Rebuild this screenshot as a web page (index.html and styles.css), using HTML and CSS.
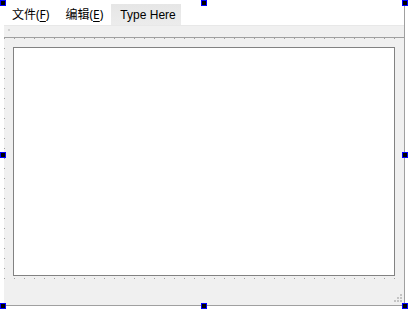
FILE: index.html
```html
<!DOCTYPE html>
<html>
<head>
  <meta charset="utf-8">
  <link rel="stylesheet" href="styles.css">
</head>
<body>
  <div class="canvas">
    <div class="form">
      <div class="menubar">
        <span class="menu-item">文件(<u>F</u>)</span>
        <span class="menu-item">编辑(<u>E</u>)</span>
        <span class="menu-item type-here">Type Here</span>
      </div>
      <div class="toolbar"><span class="grip-dot"></span></div>
      <div class="central">
        <div class="editor"></div>
      </div>
      <div class="statusbar">
        <div class="size-grip">
          <span></span>
          <span></span><span></span>
          <span></span><span></span><span></span>
        </div>
      </div>
    </div>
    <div class="handle h-tl"></div>
    <div class="handle h-tm"></div>
    <div class="handle h-tr"></div>
    <div class="handle h-ml"></div>
    <div class="handle h-mr"></div>
    <div class="handle h-bl"></div>
    <div class="handle h-bm"></div>
    <div class="handle h-br"></div>
  </div>
</body>
</html>
```

FILE: styles.css
```css
html, body {
  margin: 0;
  padding: 0;
  background: #ffffff;
  overflow: hidden;
}
.canvas {
  position: relative;
  width: 409px;
  height: 310px;
  padding: 4px 0 0 4px;
  box-sizing: border-box;
}
.form {
  width: 401px;
  height: 302px;
  border-right: 1px solid #a0a0a0;
  border-bottom: 1px solid #a0a0a0;
  box-sizing: border-box;
  display: flex;
  flex-direction: column;
  font-family: "Noto Sans", "Noto Sans CJK SC", sans-serif;
  font-size: 12px;
  color: #000;
}
.menubar {
  height: 21px;
  background: #ffffff;
  border-bottom: 1px solid #e8e8e8;
  display: flex;
  align-items: stretch;
}
.menu-item {
  display: flex;
  align-items: center;
  padding: 0 8px;
  line-height: 14px;
  white-space: nowrap;
}
.menu-item u {
  text-decoration-thickness: 1px;
  text-underline-offset: 2px;
}
.type-here {
  font-family: "Liberation Sans", sans-serif;
  background: linear-gradient(#e6e6e6, #ececec);
  padding: 0 5px 0 9px;
}
.toolbar {
  background: #f0f0f0;
  border-bottom: 1px solid #a0a0a0;
  padding: 3px 0 0 4px;
  height: 8px;
}
.grip-dot {
  display: block;
  width: 2px;
  height: 2px;
  background: #d0d0d0;
}
.central {
  height: 247px;
  padding: 9px;
  box-sizing: border-box;
  background-color: #f0f0f0;
  background-image:
    linear-gradient(90deg, transparent 1px, #f0f0f0 1px),
    linear-gradient(#a0a0a0 1px, transparent 1px);
  background-size: 10px 10px;
}
.editor {
  height: 100%;
  background: #ffffff;
  border: 1px solid #828282;
  box-sizing: border-box;
}
.statusbar {
  flex: 1;
  background: #f0f0f0;
  display: flex;
  justify-content: flex-end;
  align-items: flex-end;
  padding: 0 2px 3px 0;
}
.size-grip {
  display: grid;
  grid-template-columns: repeat(3, 2px);
  grid-template-rows: repeat(3, 2px);
  gap: 1px;
}
.size-grip span {
  background: #c4c4c4;
}
.size-grip span:nth-child(1) { grid-area: 1 / 3; }
.size-grip span:nth-child(2) { grid-area: 2 / 2; }
.size-grip span:nth-child(3) { grid-area: 2 / 3; }
.size-grip span:nth-child(4) { grid-area: 3 / 1; }
.size-grip span:nth-child(5) { grid-area: 3 / 2; }
.size-grip span:nth-child(6) { grid-area: 3 / 3; }
.handle {
  position: absolute;
  width: 6px;
  height: 6px;
  background: #000;
  border: 1px solid #0000ff;
  box-sizing: border-box;
}
.h-tl { left: 0; top: 0; }
.h-tm { left: 201px; top: 0; }
.h-tr { left: 402px; top: 0; }
.h-ml { left: 0; top: 152px; }
.h-mr { left: 402px; top: 152px; }
.h-bl { left: 0; top: 303px; }
.h-bm { left: 201px; top: 303px; }
.h-br { left: 402px; top: 303px; }
```
